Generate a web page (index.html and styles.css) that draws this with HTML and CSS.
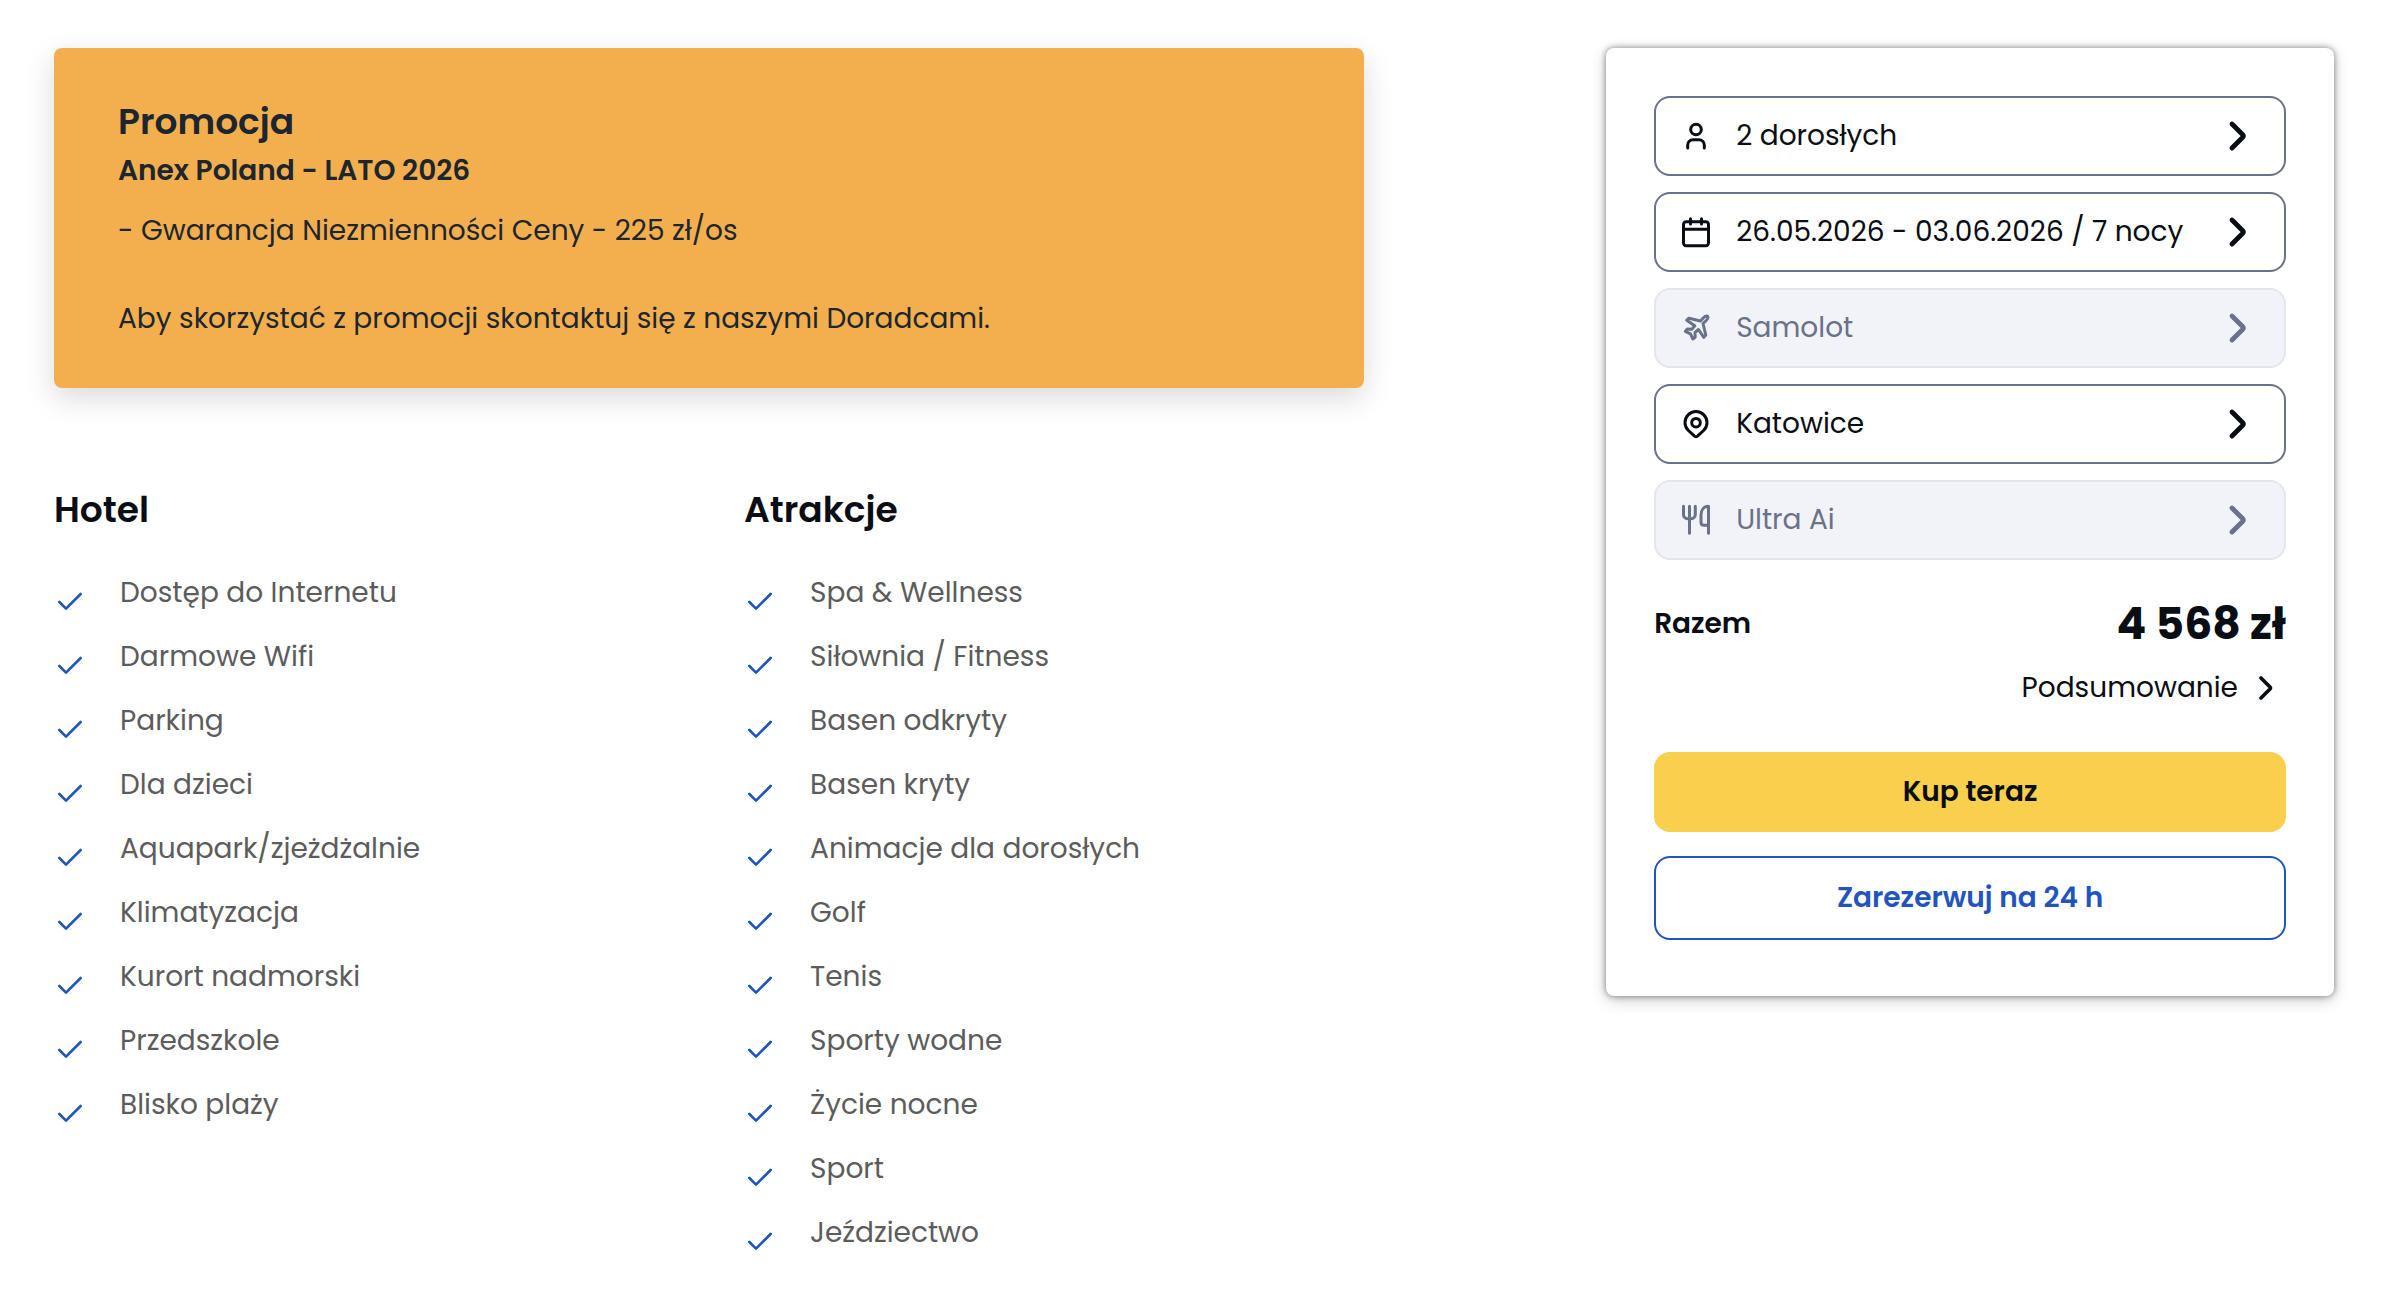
FILE: index.html
```html
<!DOCTYPE html>
<html lang="pl">
<head>
  <meta charset="UTF-8" />
  <meta name="viewport" content="width=device-width, initial-scale=1.0"/>
  <title>Oferta - Katowice, Ultra Ai</title>
  <link rel="stylesheet" href="styles.css">
</head>
<body>
  <!-- shared icons -->
  <svg class="sprite" aria-hidden="true">
    <symbol id="check" viewBox="0 0 24 24"><path d="M20 6 9 17l-5-5"/></symbol>
    <symbol id="chevron" viewBox="0 0 24 24"><path d="m9 18 5.4-5.4q.6-.6 0-1.2L9 6"/></symbol>
  </svg>

  <div class="page">
    <main>
      <section class="promo">
        <h2>Promocja</h2>
        <h3>Anex Poland - LATO 2026</h3>
        <p>- Gwarancja Niezmienności Ceny - 225 zł/os</p>
        <p>Aby skorzystać z promocji skontaktuj się z naszymi Doradcami.</p>
      </section>

      <div class="amenities">
        <section>
          <h2>Hotel</h2>
          <ul>
            <li><svg><use href="#check"/></svg>Dostęp do Internetu</li>
            <li><svg><use href="#check"/></svg>Darmowe Wifi</li>
            <li><svg><use href="#check"/></svg>Parking</li>
            <li><svg><use href="#check"/></svg>Dla dzieci</li>
            <li><svg><use href="#check"/></svg>Aquapark/zjeżdżalnie</li>
            <li><svg><use href="#check"/></svg>Klimatyzacja</li>
            <li><svg><use href="#check"/></svg>Kurort nadmorski</li>
            <li><svg><use href="#check"/></svg>Przedszkole</li>
            <li><svg><use href="#check"/></svg>Blisko plaży</li>
          </ul>
        </section>
        <section>
          <h2>Atrakcje</h2>
          <ul>
            <li><svg><use href="#check"/></svg>Spa &amp; Wellness</li>
            <li><svg><use href="#check"/></svg>Siłownia / Fitness</li>
            <li><svg><use href="#check"/></svg>Basen odkryty</li>
            <li><svg><use href="#check"/></svg>Basen kryty</li>
            <li><svg><use href="#check"/></svg>Animacje dla dorosłych</li>
            <li><svg><use href="#check"/></svg>Golf</li>
            <li><svg><use href="#check"/></svg>Tenis</li>
            <li><svg><use href="#check"/></svg>Sporty wodne</li>
            <li><svg><use href="#check"/></svg>Życie nocne</li>
            <li><svg><use href="#check"/></svg>Sport</li>
            <li><svg><use href="#check"/></svg>Jeździectwo</li>
          </ul>
        </section>
      </div>
    </main>

    <aside class="booking">
      <div class="options">
        <button type="button" class="option">
          <svg class="icon" viewBox="0 0 36 36"><circle cx="18" cy="11.5" r="5.3"/><path d="M9.7 30v-3a5.3 5.3 0 0 1 5.3-5.3h6a5.3 5.3 0 0 1 5.3 5.3v3"/></svg>
          <span>2 dorosłych</span>
          <svg class="chevron"><use href="#chevron"/></svg>
        </button>
        <button type="button" class="option">
          <svg class="icon" viewBox="0 0 36 36"><rect x="5.5" y="7.7" width="25" height="24" rx="2.7"/><path d="M5.5 15.3h25M12.5 4.7V10M23.5 4.7V10"/></svg>
          <span>26.05.2026 - 03.06.2026 / 7 nocy</span>
          <svg class="chevron"><use href="#chevron"/></svg>
        </button>
        <button type="button" class="option" disabled>
          <svg class="icon" viewBox="6 6 36 36"><path d="M28.5 17l3-3.3q1.5-1.7 3.5-1.7q1 .3 1 1q0 2-1.7 3.5L31 19.5 33.8 31l-2 2.3-5.3-7.8-3.5 3 .2 4.500-2.300 2-2.400-5.200-5.200-2.400 2-2.300 4.500.2 3-3.500-8.100-5.600 2.300-2z"/></svg>
          <span>Samolot</span>
          <svg class="chevron"><use href="#chevron"/></svg>
        </button>
        <button type="button" class="option">
          <svg class="icon" viewBox="0 0 36 36"><path d="M18 30.7c-.7 0-1.4-.4-2-1l-5.6-5.2a11 11 0 1 1 15.2 0L20 29.7c-.6.6-1.3 1-2 1z"/><circle cx="18" cy="16.7" r="4.3"/></svg>
          <span>Katowice</span>
          <svg class="chevron"><use href="#chevron"/></svg>
        </button>
        <button type="button" class="option" disabled>
          <svg class="icon" viewBox="0 0 36 36"><path d="M5.5 4.2v8.3a4.2 4.2 0 0 0 4.2 4.2h3.4a4.2 4.2 0 0 0 4.2-4.2V4.2M11.5 4.2v27.1M30.5 31.3V4.2c-4.7 0-7.5 4-7.5 9v7q0 3 3 3h4.5"/></svg>
          <span>Ultra Ai</span>
          <svg class="chevron"><use href="#chevron"/></svg>
        </button>
      </div>

      <div class="total">
        <span>Razem</span>
        <strong>4 568 zł</strong>
      </div>
      <a class="summary" href="#">Podsumowanie <svg><use href="#chevron"/></svg></a>

      <button type="button" class="buy">Kup teraz</button>
      <button type="button" class="reserve">Zarezerwuj na 24 h</button>
    </aside>
  </div>
</body>
</html>
```

FILE: styles.css
```css
* {
  box-sizing: border-box;
}
body {
  margin: 0;
  background: #fff;
  color: #090d14;
  font-family: Poppins, Inter, sans-serif;
  font-size: 28px;
  line-height: 44px;
}
h2, h3, p, ul {
  margin: 0;
  padding: 0;
}
h2 {
  font-size: 36px;
  font-weight: 600;
}
svg {
  flex: none;
  fill: none;
  stroke: currentColor;
  stroke-width: 2;
  stroke-linecap: round;
  stroke-linejoin: round;
}
button {
  font: inherit;
  color: inherit;
  cursor: pointer;
}
.sprite {
  display: none;
}
.page {
  display: grid;
  grid-template-columns: 9fr 5fr;
  column-gap: 242px;
  align-items: start;
  padding: 48px 74px 0 54px;
}
.promo {
  display: flex;
  flex-direction: column;
  padding: 52px 64px 47px;
  background: #f3af4e;
  color: #1b2631;
  border-radius: 8px;
  box-shadow: 0 10px 30px rgba(0, 0, 0, 0.15);
}
.promo h3 {
  margin: 5px 0 16px;
  font-size: 28px;
  font-weight: 600;
}
.promo p + p {
  margin-top: 44px;
}
.amenities {
  display: grid;
  grid-template-columns: 1fr 1fr;
  column-gap: 70px;
  padding-top: 100px;
}
.amenities ul {
  margin-top: 39px;
  list-style: none;
  color: #5c5c5c;
}
.amenities li {
  display: flex;
  gap: 34px;
  height: 64px;
}
.amenities li svg {
  width: 32px;
  height: 32px;
  margin-top: 15px;
  color: #2255bb;
}
.booking {
  padding: 48px 48px 56px;
  border-radius: 8px;
  box-shadow: 0 4px 16px rgba(0, 0, 0, 0.2), 0 0 6px rgba(0, 0, 0, 0.45);
}
.options {
  display: flex;
  flex-direction: column;
  gap: 16px;
}
.option {
  display: flex;
  align-items: center;
  height: 80px;
  padding: 0 22px;
  background: #fff;
  border: 2px solid #697289;
  border-radius: 16px;
  text-align: left;
}
.option:disabled {
  background: #f2f3f8;
  border-color: #e3e6ea;
  color: #697289;
  cursor: default;
}
.option span {
  flex: 1;
  margin-left: 22px;
  white-space: nowrap;
}
.icon {
  width: 36px;
  height: 36px;
  stroke-width: 3;
}
.chevron {
  width: 48px;
  height: 48px;
  stroke-width: 2.4;
}
.total {
  display: flex;
  justify-content: space-between;
  align-items: center;
  margin-top: 42px;
  font-weight: 600;
}
.total strong {
  font-size: 44px;
  font-weight: 700;
}
.summary {
  display: flex;
  justify-content: flex-end;
  align-items: center;
  gap: 8px;
  margin-top: 20px;
  color: inherit;
  text-decoration: none;
}
.summary svg {
  width: 40px;
  height: 40px;
  stroke-width: 2.2;
}
.buy, .reserve {
  display: block;
  width: 100%;
  border-radius: 16px;
  font-weight: 600;
}
.buy {
  height: 80px;
  margin-top: 42px;
  background: #f8d04d;
  border: none;
}
.reserve {
  height: 84px;
  margin-top: 24px;
  background: #fff;
  border: 2px solid #2255bb;
  color: #2255bb;
}
```
